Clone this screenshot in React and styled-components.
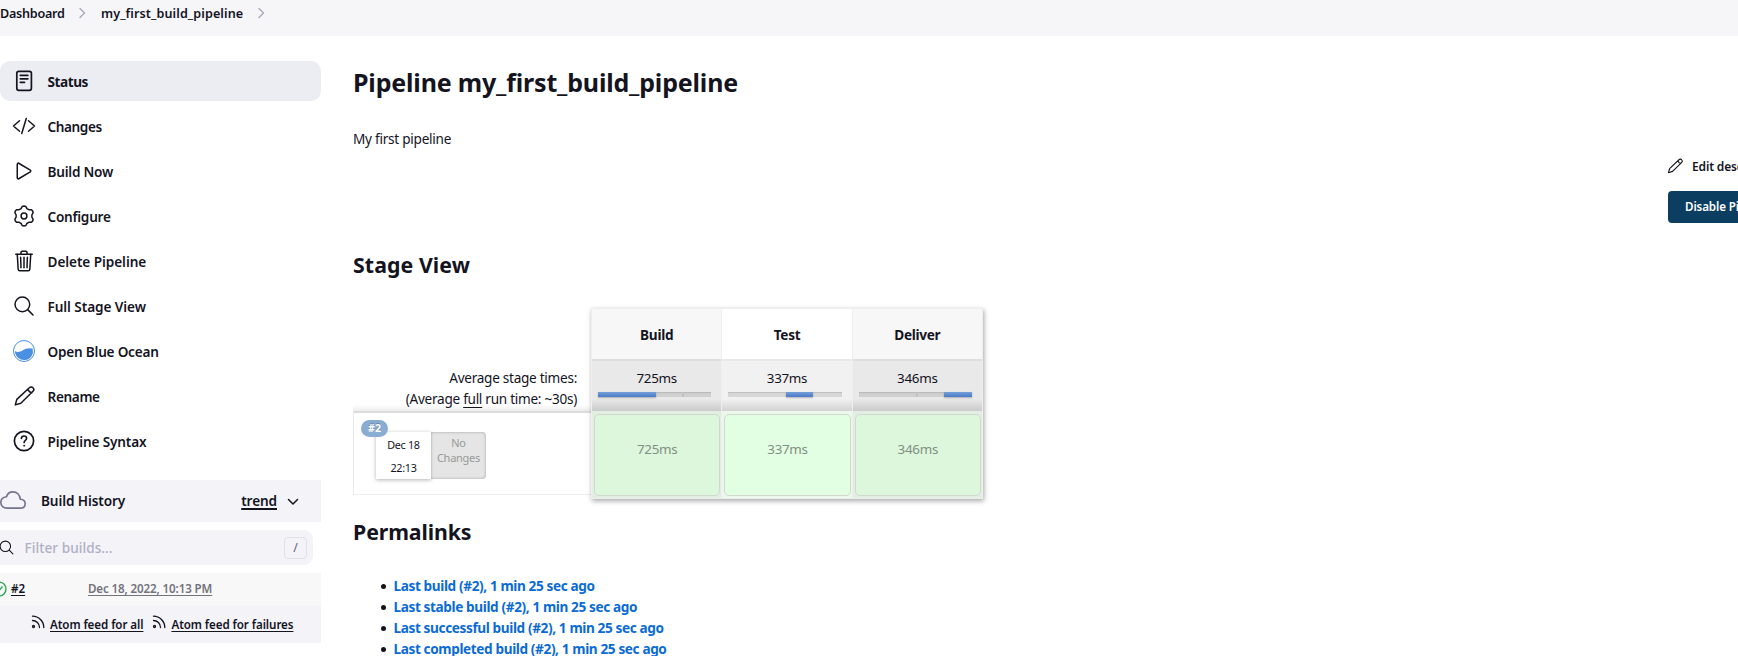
import React from 'react';
import styled, { createGlobalStyle } from 'styled-components';
import {
  IoCodeSlashOutline, IoPlayOutline, IoTrashOutline,
  IoSearchOutline, IoCloudOutline,
} from 'react-icons/io5';

const GlobalStyle = createGlobalStyle`
  *, *::before, *::after { box-sizing: border-box; }
  body {
    margin: 0;
    overflow: hidden;
    background: #fff;
    color: #14141f;
    font-family: "Noto Sans", "Open Sans", sans-serif;
    font-size: 13.6px;
    line-height: 21px;
  }
`;

const Page = styled.div`
  height: 656px;
  overflow: hidden;
`;

const Label = styled.span`
  letter-spacing: ${(p) => p.$track || 0}px;
  white-space: nowrap;
`;

/* Breadcrumbs */
const Breadcrumbs = styled.nav`
  display: flex;
  align-items: flex-start;
  height: 36px;
  padding-top: 3px;
  background: #f6f6f9;
  font-size: 12.6px;
  font-weight: 600;
`;
const Crumb = styled.a`
  width: ${(p) => p.$w}px;
  letter-spacing: ${(p) => p.$track}px;
  white-space: nowrap;
`;
const CrumbArrow = styled.svg`
  width: 8px;
  height: 12px;
  margin: 4px 15px 0 13px;
  fill: none;
  stroke: #a9a9bb;
  stroke-width: 1.4;
  stroke-linecap: round;
  stroke-linejoin: round;
`;

const Body = styled.div`
  display: flex;
`;

/* Sidebar */
const Sidebar = styled.aside`
  flex: none;
  width: 321px;
  padding-top: 25px;
`;
const Tasks = styled.div`
  display: flex;
  flex-direction: column;
  gap: 5px;
`;
const Task = styled.a`
  display: flex;
  align-items: center;
  gap: 12px;
  height: 40px;
  padding-left: 12px;
  border-radius: 10px;
  background: ${(p) => (p.$active ? '#ecedf3' : 'transparent')};
  font-weight: ${(p) => (p.$active ? 700 : 600)};
  > svg { flex: none; width: 24px; height: 24px; }
  > span { padding-top: 1px; margin-left: -0.5px; }
`;

const HistoryHeader = styled.div`
  display: flex;
  align-items: center;
  height: 42px;
  margin-top: 19px;
  padding: 0 20px 2px 0;
  background: #f3f3f8;
  font-weight: 600;
  > svg:first-child { color: #73738c; width: 26px; height: 26px; margin-right: 15px; }
`;
const Trend = styled.a`
  margin-left: auto;
  letter-spacing: ${(p) => p.$track}px;
  text-decoration: underline;
  text-decoration-thickness: 2px;
  text-underline-offset: 2px;
`;
const Chevron = styled.svg`
  width: 12px;
  height: 8px;
  margin: 3px 2px 0 10px;
  fill: none;
  stroke: #14141f;
  stroke-width: 1.5;
  stroke-linecap: round;
  stroke-linejoin: round;
`;
const Filter = styled.div`
  display: flex;
  align-items: center;
  width: 313px;
  height: 35px;
  margin-top: 8px;
  padding-right: 6px;
  border-radius: 0 9px 9px 0;
  background: #f3f3f8;
  color: #b0b0c4;
  font-weight: 500;
  > svg { color: #14141f; width: 17px; height: 17px; margin: 0 9.5px 0 -2px; }
`;
const KeyHint = styled.kbd`
  display: flex;
  align-items: center;
  justify-content: center;
  width: 23px;
  height: 22px;
  margin-left: auto;
  border: 1px solid #e1e1ea;
  border-radius: 4px;
  color: #73738c;
  font: 500 12px "Noto Sans", sans-serif;
`;
const BuildRow = styled.div`
  display: flex;
  align-items: center;
  height: 32px;
  margin-top: 8px;
  padding-bottom: 2px;
  background: #f8f8f8;
  font-size: 11.6px;
  font-weight: 600;
`;
const BuildIcon = styled.svg`
  flex: none;
  width: 16px;
  height: 16px;
  margin: 2px 0 0 -9px;
  fill: none;
  stroke: #1ea64b;
  stroke-width: 1.3;
`;
const TextLink = styled.a`
  color: ${(p) => (p.$muted ? '#73737c' : '#14141f')};
  letter-spacing: ${(p) => p.$track || 0}px;
  text-decoration: underline;
  text-underline-offset: 2px;
  text-decoration-thickness: 1px;
  white-space: nowrap;
`;
const BuildNumber = styled.div`
  width: 81px;
  padding-left: 4px;
`;
const Feeds = styled.div`
  display: flex;
  align-items: center;
  height: 38px;
  padding-left: 31px;
  background: #f3f3f8;
  font-size: 11.6px;
  font-weight: 600;
  > svg { flex: none; margin: -5px 5px 0 0; }
  > a + svg { margin-left: 9px; }
`;

/* Main column */
const Main = styled.main`
  flex: none;
  width: 1417px;
  padding: 26px 0 0 32px;
`;
const Title = styled.h1`
  margin: 0;
  font-size: 25px;
  line-height: 40px;
  font-weight: 700;
  letter-spacing: -0.17px;
`;
const Description = styled.div`
  margin-top: 26px;
  letter-spacing: -0.26px;
`;
const Actions = styled.div`
  display: flex;
  flex-direction: column;
  gap: 14px;
  margin: 6px 0 0 1315px;
  font-size: 12px;
`;
const EditLink = styled.a`
  display: flex;
  align-items: center;
  gap: 8px;
  height: 22px;
  font-weight: 600;
  letter-spacing: -0.15px;
  white-space: nowrap;
  > svg { flex: none; width: 18px; height: 18px; margin-left: -2px; }
`;
const DisableButton = styled.button`
  width: 132px;
  height: 32px;
  padding: 0 0 2px 17px;
  border: 0;
  border-radius: 4px;
  background: #0b3e61;
  color: #fff;
  font: 600 11.6px "Noto Sans", sans-serif;
  letter-spacing: -0.1px;
  text-align: left;
  white-space: nowrap;
`;
const Heading = styled.h2`
  margin: ${(p) => p.$top}px 0 0;
  font-size: 21.3px;
  line-height: 32px;
  font-weight: 700;
  letter-spacing: ${(p) => p.$track}px;
`;

/* Stage view */
const StageView = styled.section`
  display: flex;
  margin-top: 28px;
`;
const RunColumn = styled.div`
  width: 238px;
`;
const Averages = styled.div`
  display: flex;
  flex-direction: column;
  justify-content: flex-end;
  height: 102px;
  padding: 0 14px 2px 0;
  background: linear-gradient(to top, #ececec, #fff 6px);
  text-align: right;
  u { text-underline-offset: 3px; }
`;
const Run = styled.div`
  position: relative;
  height: 84px;
  padding: 19px 0 0 22px;
  border-top: 2px solid #dcdcdc;
  border-left: 1px solid #e8e8e8;
  border-bottom: 1px solid #ececec;
`;
const Badge = styled.span`
  position: absolute;
  top: 7px;
  left: 7px;
  width: 27px;
  height: 17px;
  border-radius: 9px;
  background: #89add2;
  color: #fff;
  font-size: 10.5px;
  font-weight: 700;
  line-height: 16px;
  text-align: center;
  text-shadow: 0 -1px 0 rgba(0, 0, 0, .25);
`;
const RunBox = styled.div`
  display: flex;
  width: 110px;
  height: 47px;
  line-height: 15px;
  text-align: center;
`;
const RunTime = styled.div`
  display: flex;
  flex-direction: column;
  justify-content: space-between;
  width: 55px;
  padding: 5px 0 4px;
  background: #fff;
  box-shadow: 0 1px 4px rgba(0, 0, 0, .3);
  font-size: 10.8px;
`;
const RunChanges = styled.div`
  width: 55px;
  padding-top: 3px;
  border-radius: 0 4px 4px 0;
  background: #e5e5e5;
  box-shadow: inset 0 0 3px rgba(0, 0, 0, .3);
  color: #999;
  font-size: 11px;
`;
const Stages = styled.div`
  display: flex;
  gap: 1px;
  width: 392px;
  height: 191px;
  margin-top: -1px;
  border: 1px solid #eee;
  background: #eee;
  box-shadow: 1px 2px 5px rgba(0, 0, 0, .35);
  z-index: 1;
`;
const Stage = styled.div`
  flex: 1;
  display: flex;
  flex-direction: column;
`;
const StageName = styled.div`
  height: 50px;
  padding-top: 15px;
  background: ${(p) => (p.$light ? '#fff' : '#f7f7f7')};
  font-weight: 700;
  text-align: center;
`;
const StageAverage = styled.div`
  height: 52px;
  padding: 7px 10px 0 6px;
  border-top: 2px solid ${(p) => (p.$light ? '#e8e8e8' : '#dedede')};
  background: ${(p) => (p.$light
    ? 'linear-gradient(to top, #d2d2d2, #f1f1f1 12px)'
    : 'linear-gradient(to top, #cacaca, #e9e9e9 12px)')};
  font-size: 13.4px;
  text-align: center;
  > span { display: block; padding-left: 4px; }
`;
const Track = styled.div`
  display: flex;
  height: 5px;
  margin-top: 3px;
  background: ${(p) => (p.$light ? '#d8d8d8' : '#d0d0d0')};
  box-shadow: inset 0 1px 1px rgba(0, 0, 0, .12);
`;
const Gap = styled.i`
  width: ${(p) => p.$w}px;
  border-right: ${(p) => (p.$mark ? '2px solid #c2c2c2' : '0')};
`;
const Fill = styled.i`
  width: ${(p) => p.$w}px;
  background: linear-gradient(#759fd9, #4b7bc8);
  box-shadow: 0 1px 2px rgba(0, 0, 0, .25);
`;
const StageCell = styled.div`
  flex: 1;
  padding: 3px 1px 2px 2px;
  background: ${(p) => (p.$light ? '#ebf8eb' : '#e3eee3')};
`;
const StageResult = styled.div`
  height: 82px;
  padding-top: 24px;
  border: 1px solid #d0d8d0;
  border-radius: 5px;
  background: ${(p) => (p.$light ? '#e3ffe3' : '#ddf7dd')};
  color: #838f83;
  font-size: 13.4px;
  text-align: center;
`;

const Permalinks = styled.ul`
  margin: 27px 0 0;
  padding-left: 28px;
  list-style: none;
`;
const PermalinkItem = styled.li`
  display: flex;
  align-items: center;
  gap: 7.500px;
  &::before {
    content: "";
    width: 5px;
    height: 5px;
    margin-top: 2px;
    border-radius: 50%;
    background: #14141f;
  }
`;
const Permalink = styled.a`
  color: #0b6bd4;
  font-weight: 700;
  letter-spacing: -0.38px;
  white-space: nowrap;
`;

const line = {
  fill: 'none', stroke: 'currentColor', strokeWidth: 1.5, strokeLinecap: 'round', strokeLinejoin: 'round',
};

const StatusIcon = () => (
  <svg viewBox="0 0 24 24" {...line} strokeWidth="1.7">
    <rect x="4.8" y="2.3" width="14.6" height="19" rx="2" />
    <path d="M8.3 6.3h7.6M8.3 9.8h7.6M8.3 13.3h4.2" />
  </svg>
);

const PencilIcon = () => (
  <svg viewBox="0 0 24 24" {...line}>
    <path d="M3.3 20.900l1.500-5.500L17.300 3.700a2.550 2.550 0 0 1 3.700 0 2.550 2.550 0 0 1 0 3.600L8.800 19.200zM16 4.900a4.600 4.600 0 0 0 3.900 3.800" />
  </svg>
);

// Six-lobed outline, traced around the centre of a 24px box.
const gearPoints = Array.from({ length: 72 }, (_, i) => {
  const a = (i / 72) * Math.PI * 2;
  const r = 8.9 + 1.1 * Math.tanh(1.8 * Math.cos(6 * a));
  return `${(12 + r * Math.sin(a)).toFixed(2)},${(12 - r * Math.cos(a)).toFixed(2)}`;
}).join(' ');

const GearIcon = () => (
  <svg viewBox="0 0 24 24" {...line}>
    <polygon points={gearPoints} />
    <circle cx="12" cy="12" r="2.900" />
  </svg>
);

const HelpIcon = () => (
  <svg viewBox="0 0 24 24" {...line} strokeWidth="1.7">
    <circle cx="12" cy="12" r="9.600" />
    <path d="M9.400 9.300c.2-1.600 1.200-2.300 2.600-2.300 1.500 0 2.600.9 2.600 2.300 0 2-2.500 2-2.500 4.200" />
    <circle cx="12.100" cy="16.700" r=".5" fill="currentColor" strokeWidth="1" />
  </svg>
);

const OceanIcon = () => (
  <svg viewBox="0 0 24 24">
    <circle cx="12" cy="12" r="10.500" fill="none" stroke="#4a90e2" strokeWidth="1" />
    <path d="M3 12c2 1.500 4.800 1.200 7.500-.5 3.500-2.300 7-2.700 10.200-1.700A9 9 0 1 1 3 12z" fill="#4a90e2" />
  </svg>
);

const FeedIcon = () => (
  <svg width="14" height="14" viewBox="0 0 14 14" {...line} strokeWidth="1.300">
    <circle cx="2.500" cy="11.500" r="1" />
    <path d="M1.500 5.500a7 7 0 0 1 7 7M1.500 1.200a11.300 11.300 0 0 1 11.300 11.300" />
  </svg>
);

const tasks = [
  { text: 'Status', icon: StatusIcon, track: -0.45, active: true },
  { text: 'Changes', icon: IoCodeSlashOutline, track: -0.4 },
  { text: 'Build Now', icon: IoPlayOutline, track: -0.22 },
  { text: 'Configure', icon: GearIcon, track: -0.25 },
  { text: 'Delete Pipeline', icon: IoTrashOutline, track: -0.07 },
  { text: 'Full Stage View', icon: IoSearchOutline, track: -0.08 },
  { text: 'Open Blue Ocean', icon: OceanIcon, track: -0.22 },
  { text: 'Rename', icon: PencilIcon, track: -0.35 },
  { text: 'Pipeline Syntax', icon: HelpIcon, track: -0.15 },
];

const stages = [
  { name: 'Build', time: '725ms', before: 0, fill: 58, after: 28, mark: true },
  { name: 'Test', time: '337ms', before: 58, fill: 27, light: true },
  { name: 'Deliver', time: '346ms', before: 59, mid: 26, fill: 28, mark: true },
];

const permalinks = ['Last build', 'Last stable build', 'Last successful build', 'Last completed build'];

const Arrow = () => (
  <CrumbArrow viewBox="0 0 8 12"><path d="M2 1.500L6.500 6 2 10.500" /></CrumbArrow>
);

export default function App() {
  return (
    <Page>
      <GlobalStyle />
      <Breadcrumbs>
        <Crumb $w={65} $track={-0.25}>Dashboard</Crumb>
        <Arrow />
        <Crumb $w={143} $track={0.09}>my_first_build_pipeline</Crumb>
        <Arrow />
      </Breadcrumbs>
      <Body>
        <Sidebar>
          <Tasks>
            {tasks.map(({ text, icon: Icon, track, active }) => (
              <Task key={text} $active={active}>
                <Icon />
                <Label $track={track}>{text}</Label>
              </Task>
            ))}
          </Tasks>
          <HistoryHeader>
            <IoCloudOutline />
            <Label $track={-0.1}>Build History</Label>
            <Trend $track={-0.1}>trend</Trend>
            <Chevron viewBox="0 0 12 8"><path d="M1.500 1.500L6 6l4.500-4.500" /></Chevron>
          </HistoryHeader>
          <Filter>
            <IoSearchOutline />
            <Label $track={0.05}>Filter builds...</Label>
            <KeyHint>/</KeyHint>
          </Filter>
          <BuildRow>
            <BuildIcon viewBox="0 0 16 16">
              <circle cx="8" cy="8" r="7" />
              <path d="M5 8.500l2.200 2.200L11.500 5.500" />
            </BuildIcon>
            <BuildNumber><TextLink>#2</TextLink></BuildNumber>
            <TextLink $muted $track={-0.13}>Dec 18, 2022, 10:13 PM</TextLink>
          </BuildRow>
          <Feeds>
            <FeedIcon />
            <TextLink $track={-0.08}>Atom feed for all</TextLink>
            <FeedIcon />
            <TextLink $track={-0.08}>Atom feed for failures</TextLink>
          </Feeds>
        </Sidebar>
        <Main>
          <Title>Pipeline my_first_build_pipeline</Title>
          <Description>My first pipeline</Description>
          <Actions>
            <EditLink><PencilIcon />Edit description</EditLink>
            <DisableButton>Disable Pipeline</DisableButton>
          </Actions>
          <Heading $top={26} $track={0.08}>Stage View</Heading>
          <StageView>
            <RunColumn>
              <Averages>
                <Label $track={-0.28}>Average stage times:</Label>
                <Label $track={-0.28}>(Average <u>full</u> run time: ~30s)</Label>
              </Averages>
              <Run>
                <RunBox>
                  <RunTime>
                    <Label $track={-0.3}>Dec 18</Label>
                    <Label $track={-0.3}>22:13</Label>
                  </RunTime>
                  <RunChanges>
                    <Label $track={-0.25}>No<br />Changes</Label>
                  </RunChanges>
                </RunBox>
                <Badge>#2</Badge>
              </Run>
            </RunColumn>
            <Stages>
              {stages.map((s) => (
                <Stage key={s.name}>
                  <StageName $light={s.light}><Label $track={-0.3}>{s.name}</Label></StageName>
                  <StageAverage $light={s.light}>
                    <Label $track={-0.3}>{s.time}</Label>
                    <Track $light={s.light}>
                      {s.before > 0 && <Gap $w={s.before} $mark={s.mark} />}
                      {s.mid && <Gap $w={s.mid} />}
                      <Fill $w={s.fill} />
                      {s.after && <Gap $w={s.after} $mark={s.mark} />}
                    </Track>
                  </StageAverage>
                  <StageCell $light={s.light}>
                    <StageResult $light={s.light}><Label $track={-0.3}>{s.time}</Label></StageResult>
                  </StageCell>
                </Stage>
              ))}
            </Stages>
          </StageView>
          <Heading $top={17} $track={-0.1}>Permalinks</Heading>
          <Permalinks>
            {permalinks.map((p) => (
              <PermalinkItem key={p}><Permalink>{p} (#2), 1 min 25 sec ago</Permalink></PermalinkItem>
            ))}
          </Permalinks>
        </Main>
      </Body>
    </Page>
  );
}
